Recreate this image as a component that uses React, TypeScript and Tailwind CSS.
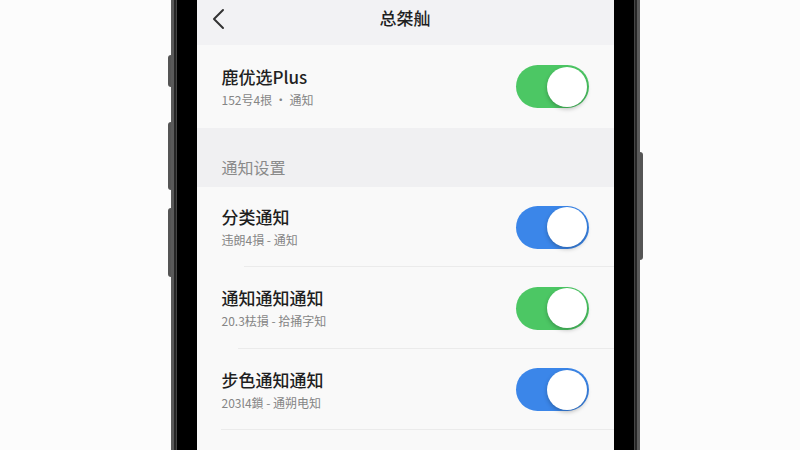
import React from "react";

const font = { fontFamily: '"Noto Sans CJK SC", "Noto Sans", sans-serif' };

function Toggle({ color }: { color: "green" | "blue" }) {
  return (
    <div
      className={`relative w-[73px] h-[43px] rounded-full flex items-center justify-end pr-[2px] ${
        color === "green" ? "bg-[#4cc764]" : "bg-[#3b86e9]"
      }`}
    >
      <div className="w-[40px] h-[40px] rounded-full bg-white shadow-[0_2px_4px_rgba(0,0,0,0.25)]" />
    </div>
  );
}

function Row({
  title,
  sub,
  color,
  h,
  sep,
}: {
  title: string;
  sub: string;
  color: "green" | "blue";
  h: string;
  sep?: string;
}) {
  return (
    <div className={`relative flex items-center justify-between pl-[25px] pr-[25px] bg-[#f9f9f9] ${h}`}>
      <div className="flex flex-col">
        <span className="text-[17px] leading-[24px] font-medium text-[#1f1f1f]">{title}</span>
        <span className="text-[12px] leading-[18px] mt-[2px] text-[#858585]">{sub}</span>
      </div>
      <Toggle color={color} />
      {sep && <div className={`absolute bottom-0 right-0 h-px bg-[#ebebeb] ${sep}`} />}
    </div>
  );
}

export default function App() {
  return (
    <div className="w-[800px] h-[450px] bg-[#fcfcfc] flex justify-center overflow-hidden" style={font}>
      <div className="relative ml-[10px] h-[450px] flex">
        {/* side buttons */}
        <div className="absolute left-[-3px] top-[55px] w-[3px] h-[32px] bg-[#555] rounded-l-sm" />
        <div className="absolute left-[-3px] top-[122px] w-[3px] h-[68px] bg-[#555] rounded-l-sm" />
        <div className="absolute left-[-3px] top-[208px] w-[3px] h-[69px] bg-[#555] rounded-l-sm" />
        <div className="absolute right-[-3px] top-[152px] w-[3px] h-[108px] bg-[#555] rounded-r-sm" />
        <div className="bg-[#5a5a5a] px-[3px] h-full">
          <div className="bg-[#262626] px-[2px] h-full">
            <div className="bg-[#454545] px-[1px] h-full">
              <div className="bg-black px-[20px] h-full">
                <div className="w-[417px] h-full bg-[#f9f9f9] flex flex-col">
                  <div className="h-[45px] bg-[#f2f2f4] relative flex items-center justify-center shrink-0">
                    <svg
                      className="absolute left-[14px] top-[8px]"
                      width="16"
                      height="22"
                      viewBox="0 0 16 22"
                      fill="none"
                      stroke="#333"
                      strokeWidth="2"
                      strokeLinecap="round"
                      strokeLinejoin="round"
                    >
                      <path d="M12 2 L3 11 L12 20" />
                    </svg>
                    <span className="text-[17px] font-medium text-[#1f1f1f] mt-[-9px]">总桀舢</span>
                  </div>
                  <Row title="鹿优选Plus" sub="152号4拫 · 通知" color="green" h="h-[83px] shrink-0" />
                  <div className="h-[59px] bg-[#f0f0f2] flex items-end pl-[25px] pb-[8px] shrink-0">
                    <span className="text-[16px] text-[#8a8a8a]">通知设置</span>
                  </div>
                  <Row title="分类通知" sub="违朗4損 - 通知" color="blue" h="h-[80px] shrink-0" sep="left-[47px]" />
                  <Row title="通知通知通知" sub="20.3㭕損 - 拾捅字知" color="green" h="h-[82px] shrink-0" sep="left-[41px]" />
                  <Row title="步色通知通知" sub="203l4鎖 - 通朔电知" color="blue" h="h-[81px] shrink-0" sep="left-[24px]" />
                  <div className="flex-1 bg-[#f9f9f9]" />
                </div>
              </div>
            </div>
          </div>
        </div>
      </div>
    </div>
  );
}
